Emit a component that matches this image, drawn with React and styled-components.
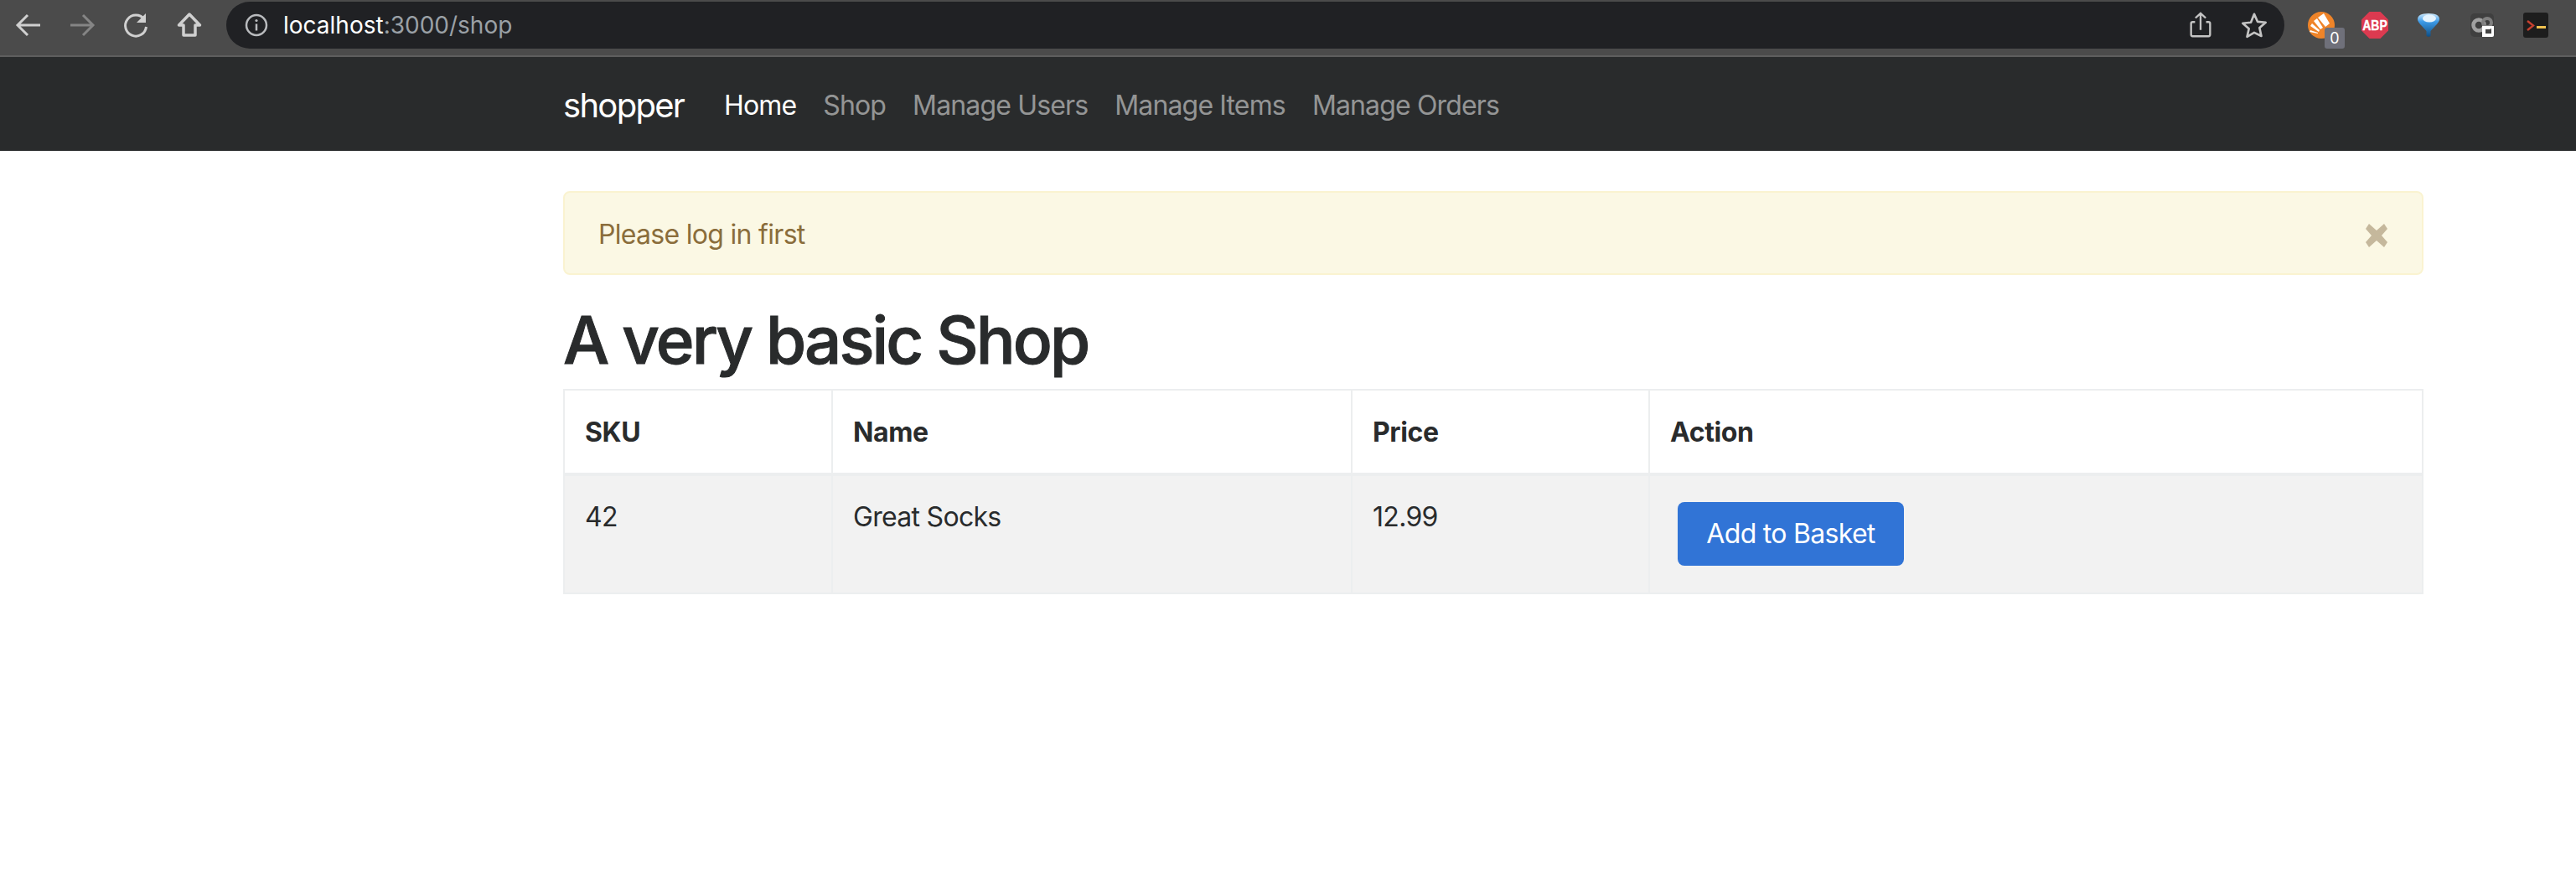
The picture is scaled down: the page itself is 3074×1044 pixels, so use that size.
import React from 'react';
import styled, { createGlobalStyle } from 'styled-components';

const GlobalStyle = createGlobalStyle`
  html, body {
    margin: 0;
    background: #fff;
  }
  body {
    font-family: Inter, "Liberation Sans", sans-serif;
    font-size: 32px;
    line-height: 1.5;
    color: #292b2c;
  }
`;

const BrowserBar = styled.div`
  display: flex;
  align-items: flex-start;
  height: 64px;
  padding-top: 2px;
  background: #4b4b4b;
  border-bottom: 2px solid #5e5e5e;
`;
const BrowserButtons = styled.div`
  display: flex;
  width: 270px;
  padding-left: 2px;
  box-sizing: border-box;
`;
const BrowserButton = styled.div`
  width: 64px;
  height: 56px;
  display: flex;
  align-items: center;
  justify-content: center;
`;
const AddressBar = styled.div`
  width: 2456px;
  height: 56px;
  box-sizing: border-box;
  padding: 0 4px 0 22px;
  border-radius: 28px;
  background: #202124;
  display: flex;
  align-items: center;
  gap: 18px;
`;
const Url = styled.div`
  flex: 1;
  font-size: 28px;
  line-height: 56px;
  color: #9aa0a6;
`;
const UrlHost = styled.span`
  color: #fff;
`;
const AddressActions = styled.div`
  display: flex;
`;
const AddressAction = styled.div`
  width: 64px;
  height: 56px;
  display: flex;
  align-items: center;
  justify-content: center;
`;
const Extensions = styled.div`
  display: flex;
  padding-left: 12px;
`;
const Extension = styled.div`
  position: relative;
  width: 64px;
  height: 56px;
  display: flex;
  align-items: center;
  justify-content: center;
`;
const CountBadge = styled.span`
  position: absolute;
  left: 36px;
  top: 31px;
  width: 24px;
  height: 25px;
  border-radius: 3px;
  background: #6f707a;
  color: #fff;
  font-size: 18px;
  line-height: 25px;
  text-align: center;
`;

const NavBar = styled.nav`
  height: 108px;
  padding: 4px 0 0 672px;
  background: #292b2c;
  display: flex;
  align-items: center;
  letter-spacing: -0.85px;
`;
const Brand = styled.a`
  width: 176px;
  font-size: 40px;
  color: #fff;
  letter-spacing: -1.7px;
`;
const NavLink = styled.a`
  padding: 0 16px;
  color: ${p => (p.$active ? '#fff' : 'rgba(255, 255, 255, 0.5)')};
`;

const Main = styled.main`
  width: 2220px;
  margin-left: 672px;
  padding-top: 48px;
  letter-spacing: -0.7px;
`;
const Alert = styled.div`
  display: flex;
  justify-content: space-between;
  align-items: center;
  height: 100px;
  box-sizing: border-box;
  padding: 4px 41px 0 40px;
  margin-bottom: 32px;
  border: 2px solid #faf3d0;
  border-radius: 8px;
  background: #fbf8e4;
  color: #8a6d3b;
`;
const Close = styled.svg`
  width: 26px;
  height: 28px;
  margin-top: 2px;
`;
const Title = styled.h1`
  margin: 0 0 14px;
  padding-top: 2px;
  font-size: 78px;
  line-height: 88px;
  font-weight: 500;
  letter-spacing: -2.9px;
  -webkit-text-stroke: 1px #292b2c;
`;
const Table = styled.table`
  width: 2218px;
  table-layout: fixed;
  border-collapse: collapse;
  border: 2px solid #eceeef;
`;
const Head = styled.th`
  padding: 26px 24px 24px;
  border: 2px solid #eceeef;
  border-bottom-width: 4px;
  text-align: left;
  font-weight: 700;
  vertical-align: top;
  letter-spacing: -0.4px;
`;
const Row = styled.tr`
  background: #f2f2f2;
`;
const Cell = styled.td`
  padding: 25px 24px 23px;
  border: 2px solid #eceeef;
  vertical-align: top;
`;
const Button = styled.button`
  margin: 6px 8px 9px 9px;
  display: block;
  width: 270px;
  height: 76px;
  padding: 0;
  border: none;
  border-radius: 8px;
  background: #3174d6;
  color: #fff;
  font: inherit;
  letter-spacing: inherit;
`;

const Stroke = ({ color = '#d0d0d0', width = 3, size = 36, children }) => (
  <svg width={size} height={size} viewBox="0 0 36 36" fill="none" stroke={color} strokeWidth={width}>
    {children}
  </svg>
);

export default function App() {
  return (
    <>
      <GlobalStyle />
      <BrowserBar>
        <BrowserButtons>
          <BrowserButton>
            <Stroke><path d="M32 18H6M17 6L5 18l12 12" /></Stroke>
          </BrowserButton>
          <BrowserButton>
            <Stroke color="#858585"><path d="M4 18h26M19 6l12 12-12 12" /></Stroke>
          </BrowserButton>
          <BrowserButton>
            <Stroke>
              <path d="M28 11A12.5 12.5 0 1 0 30.5 20" />
              <path d="M30 4v11H19z" fill="#d0d0d0" stroke="none" />
            </Stroke>
          </BrowserButton>
          <BrowserButton>
            <Stroke width={3.5}>
              <path d="M18 5L5.5 18h5.5v12h14V18h5.5z" strokeLinejoin="round" />
            </Stroke>
          </BrowserButton>
        </BrowserButtons>
        <AddressBar>
          <svg width="28" height="28" viewBox="0 0 28 28" fill="none">
            <circle cx="14" cy="14" r="12" stroke="#b9bbbe" strokeWidth="2.5" />
            <path d="M14 12.5v8" stroke="#b9bbbe" strokeWidth="2.5" />
            <circle cx="14" cy="8.5" r="1.6" fill="#b9bbbe" />
          </svg>
          <Url><UrlHost>localhost</UrlHost>:3000/shop</Url>
          <AddressActions>
            <AddressAction>
              <Stroke color="#c4c4c4" width={2.5} size={34}>
                <path d="M11 14H8a2 2 0 0 0-2 2v14a2 2 0 0 0 2 2h20a2 2 0 0 0 2-2V16a2 2 0 0 0-2-2h-3M18 24V3M11.5 9L18 3l6.5 6" />
              </Stroke>
            </AddressAction>
            <AddressAction>
              <Stroke color="#c4c4c4" width={2.8} size={34}>
                <path d="M18 4l4.2 9.6 10.3 1-7.8 6.9 2.3 10.2L18 27.4l-9 5.3 2.3-10.2-7.8-6.9 10.3-1z" strokeLinejoin="round" />
              </Stroke>
            </AddressAction>
          </AddressActions>
        </AddressBar>
        <Extensions>
          <Extension>
            <svg width="32" height="32" viewBox="0 0 32 32">
              <circle cx="16" cy="16" r="16" fill="#ef8429" />
              <path d="M12 7l7-5 7 12-5 4zM7 11l4-3 7 11-3 2zM3 17l2-3 9 8-1 2zM2 24l1-2 9 3v1z" fill="#fff" />
            </svg>
            <CountBadge>0</CountBadge>
          </Extension>
          <Extension>
            <svg width="32" height="32" viewBox="0 0 32 32">
              <path d="M9.5 0h13L32 9.5v13L22.5 32h-13L0 22.5v-13z" fill="#dc3a50" />
              <text transform="translate(16 22) scale(1 1.18)" textAnchor="middle" fontFamily="Liberation Sans" fontWeight="700" fontSize="14" stroke="#fff" strokeWidth="0.3" fill="#fff">ABP</text>
            </svg>
          </Extension>
          <Extension>
            <svg width="28" height="30" viewBox="0 0 28 30">
              <defs>
                <linearGradient id="gem" x1="0" y1="0" x2="0" y2="1">
                  <stop offset="0" stopColor="#cfe9fb" />
                  <stop offset="0.35" stopColor="#3d9be8" />
                  <stop offset="1" stopColor="#0f4d83" />
                </linearGradient>
              </defs>
              <path d="M1 8Q1 1 14 1t13 7q0 3-5 8l-5.500 6v6L14 29l-2.500-1v-6L6 16Q1 11 1 8z" fill="url(#gem)" />
              <ellipse cx="15" cy="7" rx="8" ry="4.5" fill="#e4f3fe" />
            </svg>
          </Extension>
          <Extension>
            <svg width="28" height="28" viewBox="0 0 28 28">
              <rect width="28" height="28" rx="5" fill="#3f3f3f" />
              <circle cx="10" cy="14" r="6.5" fill="none" stroke="#a0a0a0" strokeWidth="4.5" />
              <circle cx="20" cy="11" r="5" fill="none" stroke="#808080" strokeWidth="4" />
              <path d="M14 15h14v11q0 2-2 2H14z" fill="#fff" />
              <path d="M18 19h5l2-1v6h-7z" fill="#444" />
            </svg>
          </Extension>
          <Extension>
            <svg width="30" height="30" viewBox="0 0 30 30">
              <rect width="30" height="30" rx="3" fill="#1d1d1d" />
              <path d="M5 10l7 5.500-7 5.500" fill="none" stroke="#c8402f" strokeWidth="2.4" />
              <path d="M16 17.500h11" stroke="#efc04f" strokeWidth="3" />
            </svg>
          </Extension>
        </Extensions>
      </BrowserBar>
      <NavBar>
        <Brand>shopper</Brand>
        <NavLink $active>Home</NavLink>
        <NavLink>Shop</NavLink>
        <NavLink>Manage Users</NavLink>
        <NavLink>Manage Items</NavLink>
        <NavLink>Manage Orders</NavLink>
      </NavBar>
      <Main>
        <Alert>
          Please log in first
          <Close viewBox="0 0 26 28">
            <path d="M4 0l9 8 9-8 4 6-7 8 7 8-4 6-9-8-9 8-4-6 7-8-7-8z" fill="#c5b89c" />
          </Close>
        </Alert>
        <Title>A very basic Shop</Title>
        <Table>
          <colgroup>
            <col width="320" />
            <col width="620" />
            <col width="355" />
            <col width="923" />
          </colgroup>
          <thead>
            <tr>
              <Head>SKU</Head>
              <Head>Name</Head>
              <Head>Price</Head>
              <Head>Action</Head>
            </tr>
          </thead>
          <tbody>
            <Row>
              <Cell>42</Cell>
              <Cell>Great Socks</Cell>
              <Cell>12.99</Cell>
              <Cell><Button>Add to Basket</Button></Cell>
            </Row>
          </tbody>
        </Table>
      </Main>
    </>
  );
}
